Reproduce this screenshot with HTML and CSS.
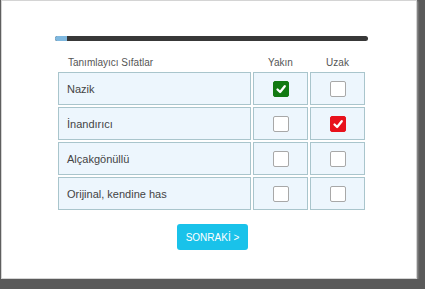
FILE: index.html
```html
<!DOCTYPE html>
<html lang="tr">
<head>
    <meta charset="UTF-8">
    <meta name="viewport" content="width=device-width, initial-scale=1.0">
    <title>Tanımlayıcı Sıfatlar</title>
    <link rel="stylesheet" href="styles.css">
</head>
<body>

<div class="frame">
    <div class="survey">
        <div class="progress">
            <div class="progress-fill"></div>
        </div>

        <div class="grid">
            <div class="head head-label">Tanımlayıcı Sıfatlar</div>
            <div class="head">Yakın</div>
            <div class="head">Uzak</div>

            <div class="cell cell-label">Nazik</div>
            <div class="cell"><span class="box box-green">
                <svg viewBox="0 0 16 16"><path d="M4 8.5 L7 11.5 L12.3 4.8" /></svg>
            </span></div>
            <div class="cell"><span class="box"></span></div>

            <div class="cell cell-label">İnandırıcı</div>
            <div class="cell"><span class="box"></span></div>
            <div class="cell"><span class="box box-red">
                <svg viewBox="0 0 16 16"><path d="M4 8.5 L7 11.5 L12.3 4.8" /></svg>
            </span></div>

            <div class="cell cell-label">Alçakgönüllü</div>
            <div class="cell"><span class="box"></span></div>
            <div class="cell"><span class="box"></span></div>

            <div class="cell cell-label">Orijinal, kendine has</div>
            <div class="cell"><span class="box"></span></div>
            <div class="cell"><span class="box"></span></div>
        </div>

        <div class="actions">
            <button class="next-button">SONRAKİ &gt;</button>
        </div>
    </div>
</div>

</body>
</html>
```

FILE: styles.css
```css
body {
    margin: 0;
    background-color: #5a5a5a;
    font-family: "Liberation Sans", Arial, sans-serif;
}

.frame {
    width: 414px;
    height: 277px;
    margin-left: 1px;
    background: #fff;
    border: 1px solid #d4d4d4;
    box-shadow: 1px 1px 2px #9a9a9a;
}

.survey {
    width: 313px;
    margin-left: 53px;
    padding-top: 35px;
}

.progress {
    height: 5px;
    background-color: #383838;
    border-radius: 3px;
    overflow: hidden;
}

.progress-fill {
    width: 12px;
    height: 100%;
    background-color: #7fb8df;
}

.grid {
    display: grid;
    grid-template-columns: 193px 55px 55px;
    grid-template-rows: 14px repeat(4, 33px);
    gap: 2px;
    margin-top: 15px;
    margin-left: 3px;
}

.head {
    font-size: 10px;
    color: #555;
    text-align: center;
    line-height: 14px;
}

.head-label {
    text-align: left;
    padding-left: 10px;
}

.cell {
    background-color: #edf6fd;
    border: 1px solid #a9c5cc;
    display: flex;
    align-items: center;
    justify-content: center;
}

.cell-label {
    justify-content: flex-start;
    padding-left: 8px;
    font-size: 11px;
    color: #444;
}

.box {
    width: 14px;
    height: 14px;
    background: #fff;
    border: 1px solid #a8a8a8;
    border-radius: 2px;
    display: flex;
}

.box svg {
    width: 14px;
    height: 14px;
}

.box path {
    fill: none;
    stroke: #fff;
    stroke-width: 2.6;
    stroke-linecap: round;
    stroke-linejoin: round;
}

.box-green {
    background-color: #127a12;
    border-color: #127a12;
}

.box-red {
    background-color: #e8121c;
    border-color: #e8121c;
}

.actions {
    display: flex;
    justify-content: center;
    margin-top: 14px;
    margin-left: 2px;
}

.next-button {
    width: 71px;
    height: 26px;
    background-color: #19c2ea;
    color: #fff;
    border: none;
    border-radius: 3px;
    font-family: "Liberation Sans", Arial, sans-serif;
    font-size: 10px;
    padding: 0;
    cursor: pointer;
}
```
